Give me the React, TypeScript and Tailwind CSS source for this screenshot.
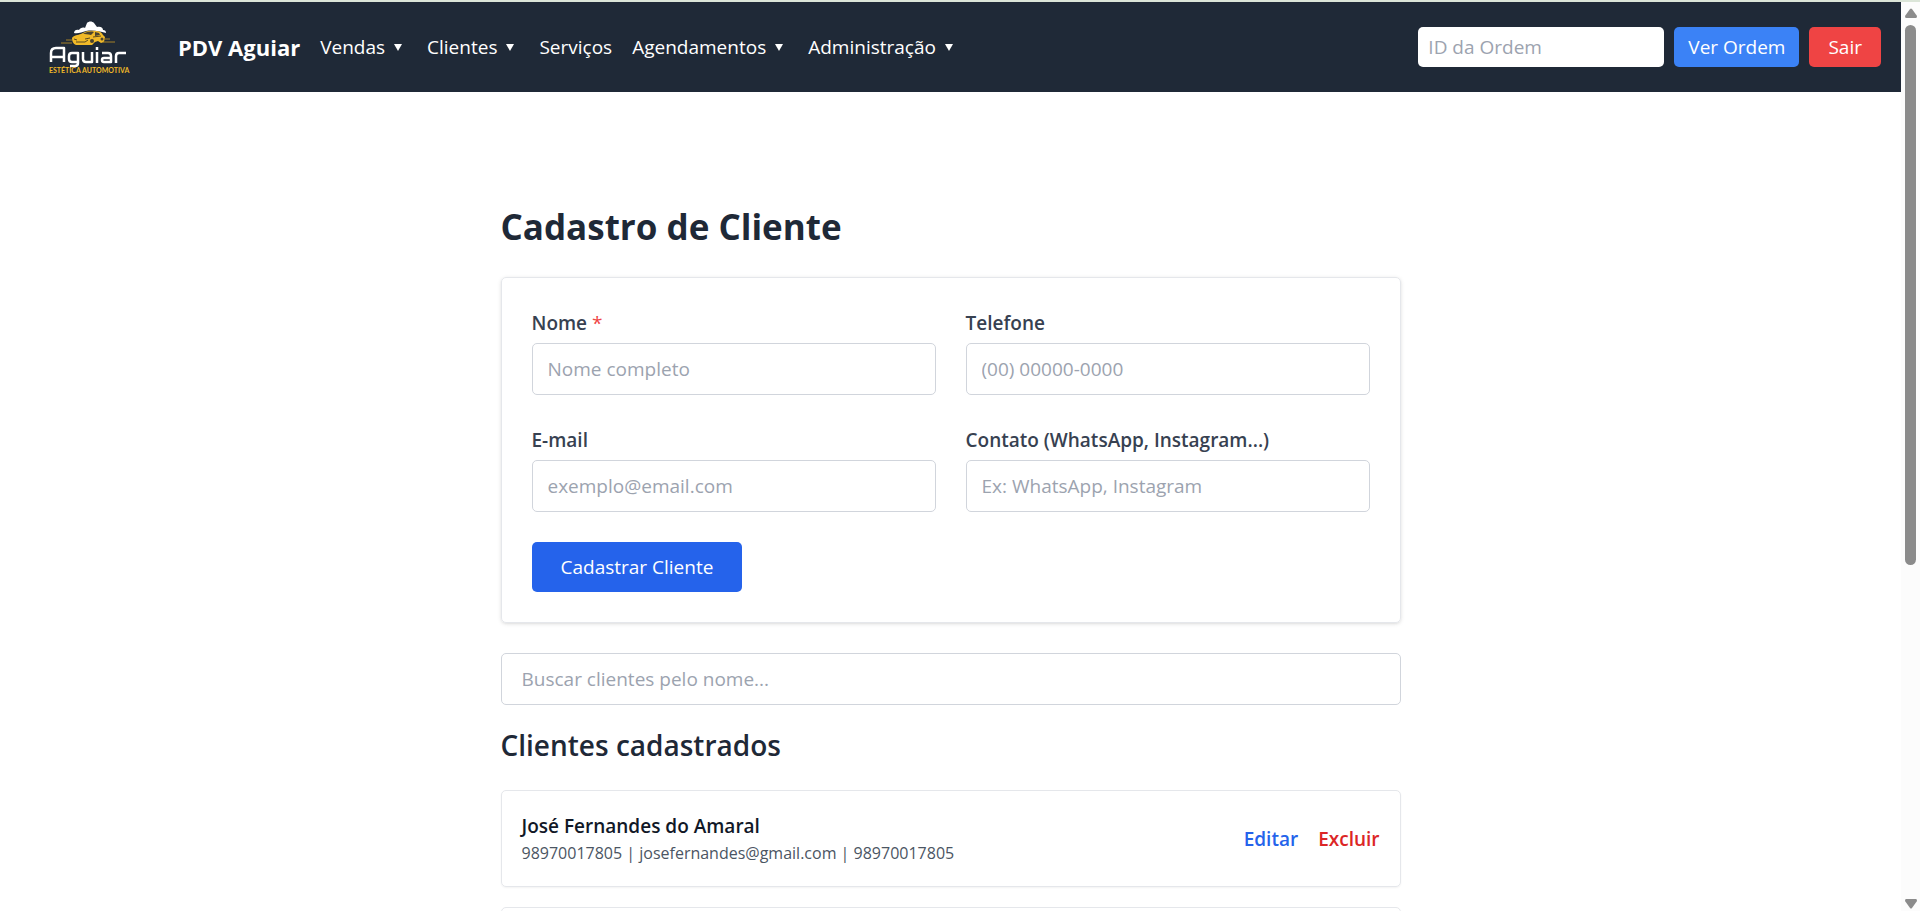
import React from "react";

const fieldClass =
  "h-[52px] w-full rounded-[5px] border border-gray-300 bg-white px-[15px] text-[19px] text-gray-800 placeholder:text-[#9ca3af]";

function Logo() {
  return (
    <svg viewBox="0 0 80 56" className="h-14 w-20 shrink-0 overflow-visible" role="img" aria-label="Aguiar Estética Automotiva">
      <path
        d="M25 14c0-3 3-4 5-3 1-2 4-3 6-2l2-5c2-2 5-2 7 0l3 4c4-1 6 1 6 3 2 0 3 1 3 3-7-2-13-3-20-2-4 1-8 3-12 2z"
        fill="#fff"
      />
      <path
        d="M23 19c2-3 6-3 9-4 4-3 10-4 15-3 4 0 6 2 7 4l2 2-1 5-3 1-3-2-3 1-3 3H27c-3-1-4-4-4-7z"
        fill="#f0b928"
      />
      <path d="M34 15c3-2 7-3 11-2l-3 3c-3-1-6-1-8-1z" fill="#4a4330" />
      <path d="M46 13l4 1 1 2-5 1z" fill="#4a4330" />
      <path d="M25 20l3 1M36 20l5-1M27 23h9l3-2M44 18l8-1" fill="none" stroke="#5b4b20" strokeWidth="1" />
      <circle cx="43" cy="22" r="2" fill="#4a4330" />
      <circle cx="53" cy="20" r="1.500" fill="#4a4330" />
      <path d="M12 24h11M17 21h6M55 20h6M54 23h12" stroke="#a58129" strokeWidth="1" />
      <g fill="none" stroke="#fff" strokeWidth="2.5" strokeLinejoin="round">
        <path d="M2 43V34q0-5 5-5h8v14M2 38h13" />
        <path d="M29 43h-6q-3 0-3-3v-3q0-3 3-3h6v10q0 3-3 3h-5" />
        <path d="M34 33v7q0 3 3 3h6V33" />
        <path d="M48 33v11M48 28v3" />
        <path d="M53 34h6q3 0 3 3v6h-7q-2 0-2-2t2-2h7" />
        <path d="M67 44v-7q0-3 3-3h7" />
      </g>
      <text x="0" y="54" fontSize="7" fontWeight="700" fill="#f0b928" fontFamily="Lato, sans-serif">
        ESTÉTICA AUTOMOTIVA
      </text>
    </svg>
  );
}

function NavMenu({ label }: { label: string }) {
  return (
    <button type="button" className="flex items-center gap-[9px]">
      {label}
      <svg viewBox="0 0 8 8" className="mr-[5px] size-2 fill-white" aria-hidden="true">
        <path d="M0 1h8L4 8z" />
      </svg>
    </button>
  );
}

function Navbar() {
  return (
    <nav className="flex h-[90px] shrink-0 items-center justify-between bg-[#1f2937] pr-5 pl-[49px] text-white">
      <div className="flex items-center gap-5">
        <Logo />
        <a href="#" className="ml-[29px] text-[22px] font-bold">PDV Aguiar</a>
        <NavMenu label="Vendas" />
        <NavMenu label="Clientes" />
        <a href="#">Serviços</a>
        <NavMenu label="Agendamentos" />
        <NavMenu label="Administração" />
      </div>
      <form className="flex items-center gap-2.5" onSubmit={(e) => e.preventDefault()}>
        <input
          aria-label="ID da Ordem"
          placeholder="ID da Ordem"
          className="h-10 w-[246px] rounded-[5px] bg-white px-2.5 text-gray-800 placeholder:text-[#9ca3af]"
        />
        <button type="submit" className="h-10 rounded-[5px] bg-[#3b82f6] px-3.5">Ver Ordem</button>
        <button type="button" className="h-10 rounded-[5px] bg-[#ef4444] px-[19px]">Sair</button>
      </form>
    </nav>
  );
}

type FieldProps = { id: string; label: string; placeholder: string; type?: string; required?: boolean };

function Field({ id, label, placeholder, type = "text", required }: FieldProps) {
  return (
    <div className="flex flex-col gap-[5px]">
      <label htmlFor={id} className="leading-[30px] font-semibold text-[#374151]">
        {label}
        {required && <span className="font-normal text-[#ef4444]"> *</span>}
      </label>
      <input id={id} type={type} placeholder={placeholder} required={required} className={fieldClass} />
    </div>
  );
}

function Scrollbar() {
  return (
    <div className="flex w-[19px] shrink-0 flex-col items-center bg-[#fcfcfc] pt-1.5 pb-0.5" aria-hidden="true">
      <svg viewBox="0 0 12 10" className="h-2.5 w-3 fill-[#8b8b8b]">
        <path d="M5 1q1-1 2 0l5 7q0 2-1 2H1q-1 0-1-2z" />
      </svg>
      <div className="mt-[7px] h-[540px] w-[11px] rounded-full bg-[#8b8b8b]" />
      <svg viewBox="0 0 12 10" className="mt-auto h-2.5 w-3 fill-[#8b8b8b]">
        <path d="M5 9q1 1 2 0l5-7q0-2-1-2H1Q0 0 0 2z" />
      </svg>
    </div>
  );
}

export default function App() {
  return (
    <div className="flex h-screen flex-col overflow-hidden bg-white font-['Open_Sans',sans-serif] text-[19px] leading-[30px]">
      <div className="h-0.5 shrink-0 bg-[#dbe5d8]" />
      <div className="flex min-h-0 flex-1">
        <div className="flex min-w-0 flex-1 flex-col overflow-hidden">
          <Navbar />
          <main className="mx-auto w-full max-w-[960px] px-[30px] pt-28">
            <h1 className="mb-7 text-[35px] leading-[45px] font-bold text-[#1f2937]">Cadastro de Cliente</h1>
            <form
              onSubmit={(e) => e.preventDefault()}
              className="grid grid-cols-2 gap-[30px] rounded-[5px] border border-gray-200 p-[30px] shadow-[0_1px_4px_rgba(0,0,0,0.1),0_1px_3px_-1px_rgba(0,0,0,0.1)]"
            >
              <Field id="nome" label="Nome" placeholder="Nome completo" required />
              <Field id="telefone" label="Telefone" placeholder="(00) 00000-0000" type="tel" />
              <Field id="email" label="E-mail" placeholder="exemplo@email.com" type="email" />
              <Field id="contato" label="Contato (WhatsApp, Instagram...)" placeholder="Ex: WhatsApp, Instagram" />
              <button type="submit" className="h-[50px] justify-self-start rounded-[5px] bg-[#2563eb] px-[29px] text-white">
                Cadastrar Cliente
              </button>
            </form>
            <input
              type="search"
              aria-label="Buscar clientes"
              placeholder="Buscar clientes pelo nome..."
              className="mt-[30px] h-[52px] w-full rounded-[5px] border border-gray-300 bg-white px-5 text-gray-800 placeholder:text-[#9ca3af]"
            />
            <h2 className="mt-5 mb-[25px] text-[28px] leading-10 font-semibold text-[#1f2937]">Clientes cadastrados</h2>
            <ul className="flex flex-col gap-5">
              <li className="flex items-center justify-between rounded-[5px] border border-gray-200 p-5 shadow-xs">
                <div>
                  <p className="font-semibold text-[#111827]">José Fernandes do Amaral</p>
                  <p className="text-[16px] leading-[25px] text-[#4b5563]">
                    98970017805 | josefernandes@gmail.com | 98970017805
                  </p>
                </div>
                <div className="flex gap-5 font-semibold">
                  <button type="button" className="text-[#2563eb]">Editar</button>
                  <button type="button" className="text-[#dc2626]">Excluir</button>
                </div>
              </li>
              <li className="h-[97px] rounded-[5px] border border-gray-200 shadow-xs" />
            </ul>
          </main>
        </div>
        <Scrollbar />
      </div>
    </div>
  );
}
